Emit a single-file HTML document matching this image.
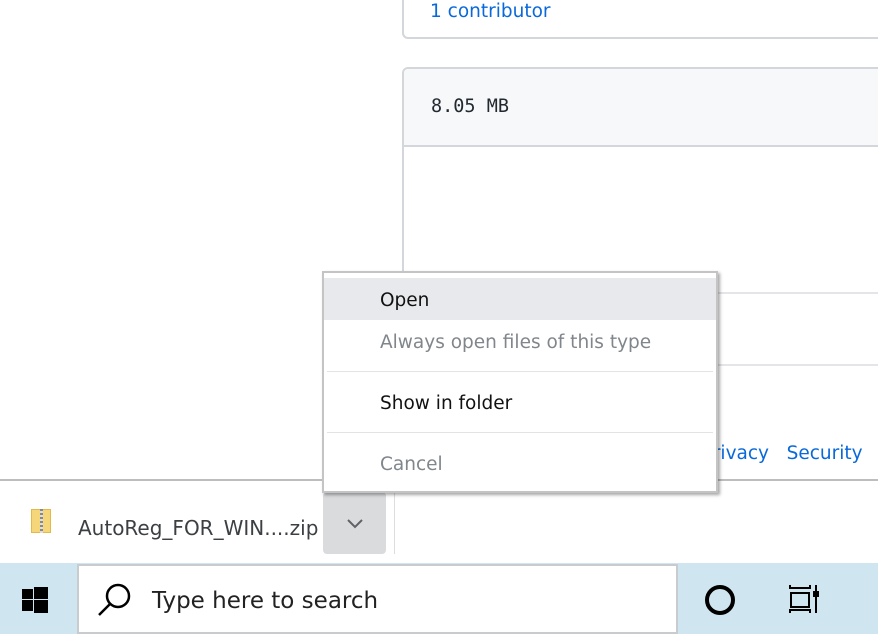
<!DOCTYPE html>
<html><head><style>
*{margin:0;padding:0;box-sizing:border-box}
body{width:878px;height:634px;overflow:hidden;background:#fff;position:relative;font-family:"Liberation Sans",sans-serif}
.a{position:absolute}
.t{font-family:"DejaVu Sans","Liberation Sans",sans-serif}
</style></head><body>
<div class="a" style="left:402px;top:-10px;width:500px;height:49px;border:2px solid #d3d6da;border-radius:6px"></div>
<div class="a t" style="left:430px;top:1px;font-size:18.5px;color:#0969da">1 contributor</div>
<div class="a" style="left:402px;top:67px;width:500px;height:440px;border:2px solid #d3d6da;border-radius:6px;overflow:hidden">
 <div style="height:78px;background:#f6f8fa;border-bottom:2px solid #d3d6da"></div>
</div>
<div class="a" style="left:431px;top:96px;font-family:'DejaVu Sans Mono','Liberation Mono',monospace;font-size:18.5px;color:#24292f">8.05 MB</div>
<div class="a" style="left:404px;top:292px;width:474px;height:2px;background:#e3e5e8"></div>
<div class="a" style="left:404px;top:364px;width:474px;height:2px;background:#e3e5e8"></div>
<div class="a" style="left:0;top:366px;width:878px;height:113px;background:#fff"></div>
<div class="a t" style="left:702px;top:443px;font-size:18.5px;color:#0969da">Privacy&nbsp;&nbsp;&nbsp;Security</div>
<div class="a" style="left:0;top:479px;width:878px;height:2px;background:#bdbdbd"></div>
<!-- download bar -->
<div class="a" style="left:0;top:481px;width:878px;height:82px;background:#fff"></div>
<div class="a" style="left:31px;top:509px;width:20px;height:24px;background:#f5d77a;border:1px solid #e2b94a"></div>
<div class="a" style="left:40px;top:509px;width:3px;height:24px;background:repeating-linear-gradient(#888 0 2px,#ddd 2px 4px)"></div>
<div class="a t" style="left:78px;top:516px;font-size:20px;color:#3c4043">AutoReg_FOR_WIN....zip</div>
<div class="a" style="left:323px;top:492px;width:63px;height:62px;background:#dadbdd;border-radius:4px"></div>
<svg class="a" style="left:345px;top:518px" width="20" height="12"><path d="M3 2 L10 9 L17 2" stroke="#5f6368" stroke-width="2" fill="none"/></svg>
<div class="a" style="left:394px;top:492px;width:1px;height:62px;background:#ddd"></div>
<!-- taskbar -->
<div class="a" style="left:0;top:563px;width:878px;height:71px;background:#cfe5ef"></div>
<svg class="a" style="left:22px;top:587px" width="26" height="26"><rect x="0" y="2" width="11" height="10"/><rect x="12" y="0" width="14" height="12"/><rect x="0" y="13" width="11" height="11"/><rect x="12" y="13" width="14" height="13"/></svg>
<div class="a" style="left:77px;top:564px;width:601px;height:70px;background:#fff;border:2px solid #c9cccf"></div>
<svg class="a" style="left:96px;top:580px" width="40" height="40"><circle cx="22" cy="16" r="11" stroke="#000" stroke-width="2.5" fill="none"/><path d="M14 24 L3 35" stroke="#000" stroke-width="2.5"/></svg>
<div class="a t" style="left:152px;top:588px;font-size:23px;color:#222">Type here to search</div>
<div class="a" style="left:705px;top:585px;width:30px;height:30px;border:4px solid #000;border-radius:50%"></div>
<svg class="a" style="left:788px;top:584px" width="32" height="30" fill="none" stroke="#000" stroke-width="2"><path d="M2 1v3h20V1M3 9h18v14H3zM2 29v-3h20v3M28 1v28"/><rect x="26" y="8" width="4" height="4" fill="#000"/></svg>
<!-- menu -->
<div class="a" style="left:322px;top:271px;width:396px;height:222px;background:#fff;border:2px solid #c4c4c4;box-shadow:2px 2px 3px rgba(0,0,0,.35)">
 <div style="position:absolute;left:0;top:5px;width:392px;height:42px;background:#e8e9ec"></div>
 <div style="position:absolute;left:3px;top:98px;width:386px;height:1px;background:#e3e3e3"></div>
 <div style="position:absolute;left:3px;top:159px;width:386px;height:1px;background:#e3e3e3"></div>
 <div class="t" style="position:absolute;left:56px;top:17px;font-size:18.5px;color:#111">Open</div>
 <div class="t" style="position:absolute;left:56px;top:59px;font-size:18.5px;color:#80868b">Always open files of this type</div>
 <div class="t" style="position:absolute;left:56px;top:120px;font-size:18.5px;color:#111">Show in folder</div>
 <div class="t" style="position:absolute;left:56px;top:181px;font-size:18.5px;color:#80868b">Cancel</div>
</div>
</body></html>
